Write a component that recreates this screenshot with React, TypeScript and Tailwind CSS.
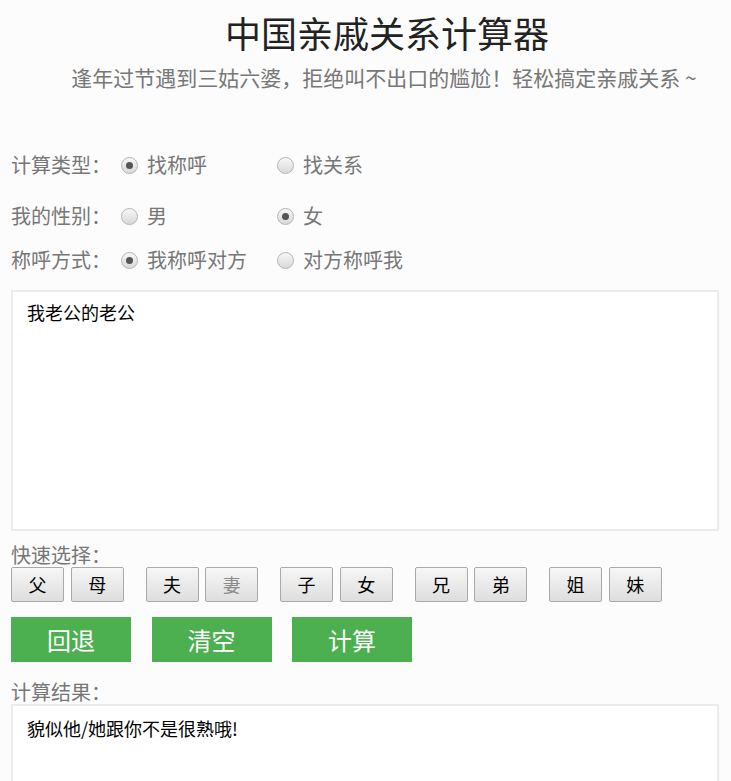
import React, { useState } from "react";

const groups = [
  ["父", "母"],
  ["夫", "妻"],
  ["子", "女"],
  ["兄", "弟"],
  ["姐", "妹"],
];

const Radio = ({ checked, label }: { checked: boolean; label: string }) => (
  <label className="flex w-[156px] items-center cursor-pointer">
    <span className="flex h-[17px] w-[17px] items-center justify-center rounded-full border border-[#b4b4b4] bg-gradient-to-b from-[#f7f7f7] to-[#d9d9d9]">
      {checked && <span className="h-[7px] w-[7px] rounded-full bg-[#555]" />}
    </span>
    <span className="ml-[9px] text-[20px] leading-[30px] text-[#777]">{label}</span>
  </label>
);

const Row = ({
  label,
  options,
  checked,
  className,
}: {
  label: string;
  options: string[];
  checked: number;
  className: string;
}) => (
  <div className={`flex items-center ${className}`}>
    <span className="w-[110px] text-[20px] leading-[30px] text-[#777]">{label}</span>
    {options.map((o, i) => (
      <Radio key={o} label={o} checked={i === checked} />
    ))}
  </div>
);

const App: React.FC = () => {
  const [text, setText] = useState("我老公的老公");

  return (
    <div className="min-h-screen bg-[#fcfcfc] pl-[11px] pr-[12px] font-['Microsoft_YaHei','Noto_Sans_CJK_SC',sans-serif]">
      {/* HEADER */}
      <div className="pl-[44px] text-center">
        <h1 className="pt-[10px] text-[36px] leading-[44px] font-normal text-[#222]">
          中国亲戚关系计算器
        </h1>
        <p className="-ml-[6px] mt-[8px] text-[21px] leading-[30px] text-[#777]">
          逢年过节遇到三姑六婆，拒绝叫不出口的尴尬！轻松搞定亲戚关系 ~
        </p>
      </div>

      {/* OPTIONS */}
      <Row className="mt-[58px]" label="计算类型：" options={["找称呼", "找关系"]} checked={0} />
      <Row className="mt-[21px]" label="我的性别：" options={["男", "女"]} checked={1} />
      <Row className="mt-[14px]" label="称呼方式：" options={["我称呼对方", "对方称呼我"]} checked={0} />

      {/* INPUT */}
      <textarea
        value={text}
        onChange={(e) => setText(e.target.value)}
        className="mt-[15px] block h-[241px] w-full resize-none border-2 border-[#ebebeb] bg-white px-[14px] pt-[7px] text-[18px] leading-[27px] text-black outline-none"
      />

      {/* QUICK SELECT */}
      <div className="mt-[12px] text-[20px] leading-[24px] text-[#777]">快速选择：</div>
      <div className="flex gap-[21.75px]">
        {groups.map((g) => (
          <div key={g[0]} className="flex gap-[6.75px]">
            {g.map((c) => (
              <button
                key={c}
                className={`h-[35px] w-[53px] rounded-[2px] border border-[#a9a9a9] bg-gradient-to-b from-[#f6f6f6] to-[#dedede] text-[18px] ${
                  c === "妻" ? "text-[#8a8a8a]" : "text-black"
                }`}
              >
                {c}
              </button>
            ))}
          </div>
        ))}
      </div>

      {/* ACTIONS */}
      <div className="mt-[15px] flex gap-[20.5px]">
        {["回退", "清空", "计算"].map((b) => (
          <button key={b} className="h-[45px] w-[120px] bg-[#4caf50] text-[24px] text-white">
            {b}
          </button>
        ))}
      </div>

      {/* RESULT */}
      <div className="mt-[18px] text-[20px] leading-[24px] text-[#777]">计算结果：</div>
      <div className="h-[150px] border-2 border-[#ebebeb] bg-white px-[14px] pt-[9px] text-[18px] leading-[27px] text-black">
        貌似他/她跟你不是很熟哦!
      </div>
    </div>
  );
};

export default App;
